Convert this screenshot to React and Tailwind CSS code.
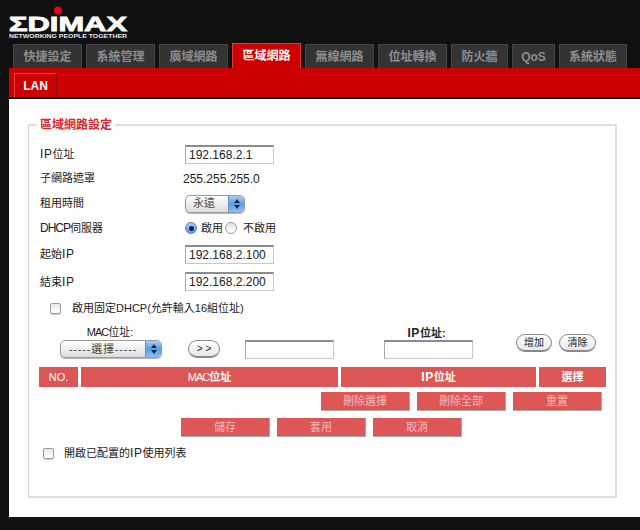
import React from "react";

const font = { fontFamily: '"Liberation Sans","Noto Sans CJK TC",sans-serif' };

const tabs = [
  ["快捷設定", "w-[69px]"],
  ["系統管理", "w-[69px]"],
  ["廣域網路", "w-[69px]"],
  ["區域網路", "w-[69px]", true],
  ["無線網路", "w-[69px]"],
  ["位址轉換", "w-[69px]"],
  ["防火牆", "w-[57px]"],
  ["QoS", "w-[43px]"],
  ["系統狀態", "w-[68px]"],
];

function Logo() {
  return (
    <svg width="122" height="38" viewBox="0 0 122 38" className="block ml-[8px]">
      <circle cx="50" cy="4.5" r="4" fill="#e8001c" />
      <text x="1" y="24.8" textLength="118" lengthAdjust="spacingAndGlyphs" fontSize="21" fontWeight="900" fill="#fff" stroke="#fff" strokeWidth="0.8" fontFamily="Liberation Sans">ΣDIMAX</text>
      <text x="1" y="32.2" textLength="118" lengthAdjust="spacingAndGlyphs" fontSize="6.2" fontWeight="700" fill="#e8e8e8" fontFamily="Liberation Sans">NETWORKING PEOPLE TOGETHER</text>
    </svg>
  );
}

const Ip = () => <span className="text-[12px] tracking-[0.6px]">IP</span>;

function TextBox({ value, w = "w-[89px]" }) {
  return (
    <div className={`${w} h-[19px] bg-white border border-[#c8c8c8] border-t-2 border-t-[#8c8c8c] border-l-[#a8a8a8] flex items-center pl-[3px] text-[12px] text-[#222]`}>
      {value}
    </div>
  );
}

function Stepper({ w, children, pad }) {
  return (
    <div className={`${w} h-[18px] rounded-[5px] border border-[#9a9a9a] flex overflow-hidden shadow-[0_1px_1px_rgba(0,0,0,0.3)] bg-gradient-to-b from-[#ffffff] via-[#eeeeee] to-[#dcdcdc]`}>
      <div className={`flex-1 text-[11px] text-[#444] flex items-center ${pad}`}>{children}</div>
      <div className="w-[16px] bg-gradient-to-b from-[#a9cdf5] via-[#5b9be6] to-[#8fbdf0] border-l border-[#6b8fc0] flex flex-col items-center justify-center gap-[2px]">
        <span className="w-0 h-0 border-l-[3px] border-r-[3px] border-b-[4px] border-l-transparent border-r-transparent border-b-[#1a2a44]" />
        <span className="w-0 h-0 border-l-[3px] border-r-[3px] border-t-[4px] border-l-transparent border-r-transparent border-t-[#1a2a44]" />
      </div>
    </div>
  );
}

function Radio({ on }) {
  return (
    <span className={`w-[12px] h-[12px] rounded-full flex items-center justify-center shrink-0 border ${on ? "border-[#4f86c8] bg-gradient-to-b from-[#a5cbf2] to-[#5d9be0]" : "border-[#9c9c9c] bg-gradient-to-b from-[#e4e4e4] to-[#ffffff]"}`}>
      {on && <span className="w-[5px] h-[5px] rounded-full bg-[#14243f]" />}
    </span>
  );
}

function Check() {
  return <span className="w-[11px] h-[11px] rounded-[2px] border border-[#9a9a9a] bg-gradient-to-b from-[#e8e8e8] to-[#ffffff] shadow-[0_1px_1px_rgba(0,0,0,0.2)] shrink-0" />;
}

function Pill({ children, w }) {
  return (
    <div className={`${w} h-[18px] rounded-full border border-[#8a8a8a] border-b-2 bg-gradient-to-b from-[#ffffff] to-[#e8e8e8] flex items-center justify-center text-[10px] text-[#222]`}>
      {children}
    </div>
  );
}

function ActionBtn({ children }) {
  return (
    <div className="w-[89px] h-[19px] bg-[#de5757] border-r border-b border-[#a9a9a9] flex items-center justify-center text-[11px] text-[#f7bcbc]">
      {children}
    </div>
  );
}

function Row({ h, label, children }) {
  return (
    <div className={`${h} flex items-center pl-[11px] text-[11px] text-[#222]`}>
      <div className="w-[145px]">{label}</div>
      {children}
    </div>
  );
}

function Th({ w, children }) {
  return <div className={`${w} h-[20px] bg-[#dd5656] text-white font-bold text-[11px] flex items-center justify-center`}>{children}</div>;
}

export default function App() {
  return (
    <div className="w-[640px] h-[530px] bg-[#111111] overflow-hidden" style={font}>
      <div className="h-[44px] pt-[6px]"><Logo /></div>

      <div className="flex items-end gap-[4px] pl-[13px] h-[24px]">
        {tabs.map(([t, w, active]) => (
          <div
            key={t}
            className={`${w} flex items-center justify-center text-[12px] font-bold border border-b-0 ${active ? "h-[25px] bg-[#cc0000] border-[#e23a3a] text-white" : "h-[24px] bg-[#333333] border-[#454545] text-[#8e8e8e]"}`}
          >
            {t}
          </div>
        ))}
      </div>

      <div className="ml-[9px] h-[29px] bg-[#cc0000] pl-[5px] pt-[5px]">
        <div className="w-[43px] h-[24px] border-l border-t border-r border-l-[#e54444] border-t-[#e54444] border-r-[#8e0000] text-white font-bold text-[12px] flex items-center justify-center">LAN</div>
      </div>
      <div className="ml-[9px] h-[2px] bg-black" />

      <div className="ml-[9px] h-[418px] bg-white pl-[19px] pt-[18px]">
        <fieldset className="w-[589px] h-[381px] border border-[#cfcfcf] border-r-2 border-t-2 border-r-[#dedede] border-t-[#dedede] border-b-2 border-b-[#dedede]">
          <legend className="ml-[8px] px-[3px] text-[12px] leading-[16px] font-bold text-[#d8262c]">區域網路設定</legend>
          <div className="pt-[9px]">
            <Row h="h-[24px]" label={<><Ip />位址</>}><TextBox value="192.168.2.1" /></Row>
            <Row h="h-[25px]" label="子網路遮罩"><span className="-ml-[2px] text-[12px]">255.255.255.0</span></Row>
            <Row h="h-[25px]" label="租用時間"><Stepper w="w-[60px]" pad="pl-[7px]">永遠</Stepper></Row>
            <Row h="h-[24px]" label={<><span className="text-[12px] tracking-[-1px]">DHCP</span>伺服器</>}>
              <div className="flex items-center">
                <Radio on /><span className="ml-[4px]">啟用</span>
                <span className="ml-[2px]"><Radio /></span><span className="ml-[6px]">不啟用</span>
              </div>
            </Row>
            <Row h="h-[28px]" label={<>起始<Ip /></>}><TextBox value="192.168.2.100" /></Row>
            <Row h="h-[27px]" label={<>結束<Ip /></>}><TextBox value="192.168.2.200" /></Row>
            <div className="h-[26px] flex items-center pl-[21px] text-[11px] text-[#222]">
              <Check />
              <span className="ml-[11px]">啟用固定DHCP(允許輸入16組位址)</span>
            </div>

            <div className="h-[38px] flex items-end text-[11px] text-[#222]">
              <div className="ml-[31px] w-[102px] mb-[1px]">
                <div className="text-center pr-[2px] leading-[14px] mb-[1px]"><span className="tracking-[-1px]">MAC</span>位址:</div>
                <Stepper w="w-[102px]" pad="justify-center tracking-[0.8px]">-----選擇-----</Stepper>
              </div>
              <div className="ml-[26px] mb-[1px]"><Pill w="w-[32px]"><span className="tracking-[3px] pl-[3px]">&gt;&gt;</span></Pill></div>
              <div className="ml-[25px]"><TextBox value="" /></div>
              <div className="ml-[50px] w-[89px]">
                <div className="text-center leading-[14px] font-bold -ml-[4px]"><Ip />位址:</div>
                <TextBox value="" />
              </div>
              <div className="ml-[43px] flex gap-[7px] mb-[7px]">
                <Pill w="w-[36px]">增加</Pill>
                <Pill w="w-[37px]">清除</Pill>
              </div>
            </div>

            <div className="mt-[8px] ml-[10px] flex gap-[3px]">
              <Th w="w-[39px]"><span className="font-normal">NO.</span></Th>
              <Th w="w-[257px]"><span className="font-normal tracking-[-1px]">MAC</span>位址</Th>
              <Th w="w-[195px]"><Ip />位址</Th>
              <Th w="w-[67px]">選擇</Th>
            </div>
            <div className="mt-[5px] ml-[292px] flex gap-[7px]">
              <ActionBtn>刪除選擇</ActionBtn>
              <ActionBtn>刪除全部</ActionBtn>
              <ActionBtn>重置</ActionBtn>
            </div>
            <div className="mt-[7px] ml-[152px] flex gap-[7px]">
              <ActionBtn>儲存</ActionBtn>
              <ActionBtn>套用</ActionBtn>
              <ActionBtn>取消</ActionBtn>
            </div>
            <div className="mt-[7px] h-[18px] flex items-center pl-[14px] text-[11px] text-[#222]">
              <Check />
              <span className="ml-[10px]">開啟已配置的<Ip />使用列表</span>
            </div>
          </div>
        </fieldset>
      </div>
    </div>
  );
}
